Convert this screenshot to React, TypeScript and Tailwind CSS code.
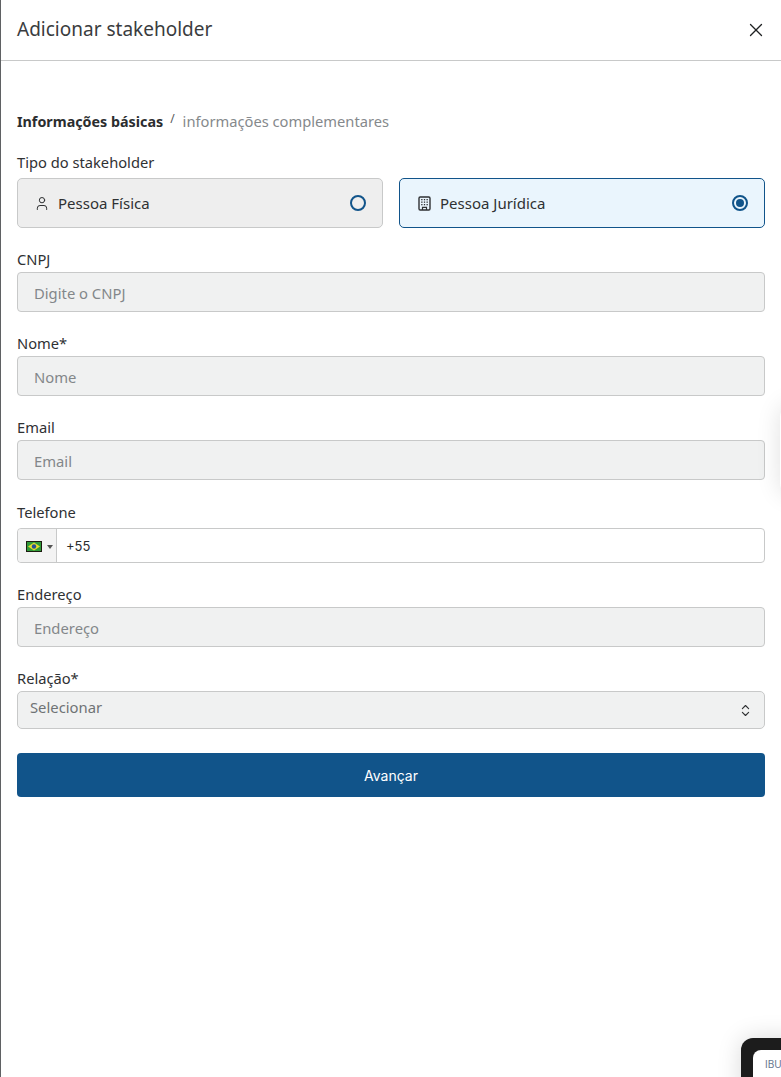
import React from "react";
import { X, User, ChevronsUpDown } from "lucide-react";

const font = "font-['Noto_Sans','Open_Sans',sans-serif]";

function Label({ children, cls }: { children: React.ReactNode; cls: string }) {
  return <div className={`text-[14.7px] leading-[20px] text-[#2f3133] ${cls}`}>{children}</div>;
}

function Field({ label, placeholder, cls }: { label: string; placeholder: string; cls: string }) {
  return (
    <div className={cls}>
      <Label cls="mb-[3px]">{label}</Label>
      <div className="h-[40px] rounded-[4px] border border-[#c8c9c9] bg-[#f0f1f1] px-4 pt-[2px] flex items-center text-[14.8px] text-[#83878a]">
        {placeholder}
      </div>
    </div>
  );
}

function BrazilFlag() {
  return (
    <svg width="16" height="11" viewBox="0 0 16 11" className="block">
      <rect width="16" height="11" fill="#1c1c10" />
      <rect x="1" y="1" width="14" height="9" fill="#2f9a3a" />
      <path d="M8 1.6 14 5.5 8 9.4 2 5.5Z" fill="#e3dc2c" />
      <circle cx="8" cy="5.5" r="2.2" fill="#274f96" />
    </svg>
  );
}

function BuildingIcon() {
  return (
    <svg width="13" height="15" viewBox="0 0 13 15" fill="none" className="block">
      <rect x="1" y="1" width="11" height="13" rx="1.2" stroke="currentColor" strokeWidth="1.4" />
      <g fill="currentColor">
        <rect x="3.2" y="3" width="1.3" height="1.3" />
        <rect x="5.85" y="3" width="1.3" height="1.3" />
        <rect x="8.5" y="3" width="1.3" height="1.3" />
        <rect x="3.2" y="5.5" width="1.3" height="1.3" />
        <rect x="5.85" y="5.5" width="1.3" height="1.3" />
        <rect x="8.5" y="5.5" width="1.3" height="1.3" />
        <rect x="3.2" y="8" width="1.3" height="1.3" />
        <rect x="5.85" y="8" width="1.3" height="1.3" />
        <rect x="8.5" y="8" width="1.3" height="1.3" />
      </g>
      <path d="M4.5 14v-2.6h4V14" stroke="currentColor" strokeWidth="1.2" />
    </svg>
  );
}

function TypeCard({ icon, label, selected }: { icon: React.ReactNode; label: string; selected?: boolean }) {
  return (
    <div
      className={`h-[50px] rounded-[5px] border flex items-center pl-[16px] pr-[16px] ${
        selected ? "border-[#11548a] bg-[#eaf5fd]" : "border-[#c8c9c9] bg-[#eeeeee]"
      }`}
    >
      <span className="w-[16px] flex justify-center text-[#2f3133] mr-[8px]">{icon}</span>
      <span className="text-[15px] text-[#2f3133]">{label}</span>
      <span className="ml-auto w-[16px] h-[16px] rounded-full border-2 border-[#11548a] flex items-center justify-center">
        {selected && <span className="block w-[8px] h-[8px] rounded-full bg-[#11548a]" />}
      </span>
    </div>
  );
}

export default function App() {
  return (
    <div className={`relative w-[781px] h-[1077px] overflow-hidden bg-white border-l border-[#5f6163] ${font}`}>
      <header className="h-[61px] border-b border-[#c8c9c9] flex items-center justify-between pl-[16px] pr-[14px]">
        <h1 className="text-[19px] leading-[26px] font-normal text-[#3a3c3e] -mt-[2px]">Adicionar stakeholder</h1>
        <X size={22} strokeWidth={1.45} className="text-[#1f2123] -mt-[1px]" />
      </header>

      <main className="pl-[16px] pr-[16px] pt-[50px]">
        <nav className="flex items-center h-[20px] leading-[20px]">
          <span className="font-bold text-[14.3px] text-[#2b2d2f] pt-[2px]">Informações básicas</span>
          <span className="text-[#55585a] text-[12px] ml-[7px] mr-[8px] -mt-[4px]">/</span>
          <span className="text-[14.7px] text-[#85898c]">informações complementares</span>
        </nav>

        <Label cls="mt-[21px] mb-[6px]">Tipo do stakeholder</Label>
        <div className="grid grid-cols-2 gap-4">
          <TypeCard icon={<User size={17} strokeWidth={1.5} />} label="Pessoa Física" />
          <TypeCard icon={<BuildingIcon />} label="Pessoa Jurídica" selected />
        </div>

        <Field cls="mt-[21px]" label="CNPJ" placeholder="Digite o CNPJ" />
        <Field cls="mt-[21px]" label="Nome*" placeholder="Nome" />
        <Field cls="mt-[21px]" label="Email" placeholder="Email" />

        <div className="mt-[22px]">
          <Label cls="mb-[6px]">Telefone</Label>
          <div className="h-[35px] rounded-[4px] border border-[#c8c9c9] bg-white flex items-center">
            <div className="h-full w-[39px] shrink-0 rounded-l-[4px] border-r border-[#c8c9c9] bg-[#f3f3f3] flex items-center pl-[8px] pt-[2px]">
              <BrazilFlag />
              <span className="ml-[5px] w-0 h-0 border-x-[3px] border-x-transparent border-t-[4px] border-t-[#555555]" />
            </div>
            <span className="pl-[9px] pt-[2px] text-[13px] text-[#2b2d2f] font-['Inter',sans-serif]">+55</span>
          </div>
        </div>

        <Field cls="mt-[21px]" label="Endereço" placeholder="Endereço" />

        <div className="mt-[21px]">
          <Label cls="mb-[3px]">Relação*</Label>
          <div className="h-[38px] rounded-[5px] border border-[#c8c9c9] bg-[#f0f1f1] pl-[12px] pr-[12px] flex items-center justify-between text-[14.8px] text-[#6f7375]">
            <span className="-mt-[6px]">Selecionar</span>
            <ChevronsUpDown size={15} strokeWidth={1.8} className="text-[#2f3133] -mr-[1px]" />
          </div>
        </div>

        <button className="mt-[24px] w-full h-[44px] rounded-[4px] bg-[#11548a] text-white text-[14px] font-['Inter',sans-serif]">
          Avançar
        </button>
      </main>

      <div className="absolute left-[779px] top-[405px] w-[60px] h-[90px] rounded-[12px] bg-white shadow-[0_0_24px_rgba(0,0,0,0.12)]" />

      <div className="absolute left-[740px] top-[1038px] w-[80px] h-[60px] rounded-tl-[12px] bg-[#1c1c1c] shadow-[0_0_24px_rgba(0,0,0,0.15)]">
        <div className="absolute left-[12px] top-[12px] w-[60px] h-[40px] rounded-tl-[8px] bg-white pl-[12px] pt-[7px] text-[10px] leading-[14px] text-[#67788f] font-['Inter',sans-serif]">
          IBU
        </div>
      </div>
    </div>
  );
}
